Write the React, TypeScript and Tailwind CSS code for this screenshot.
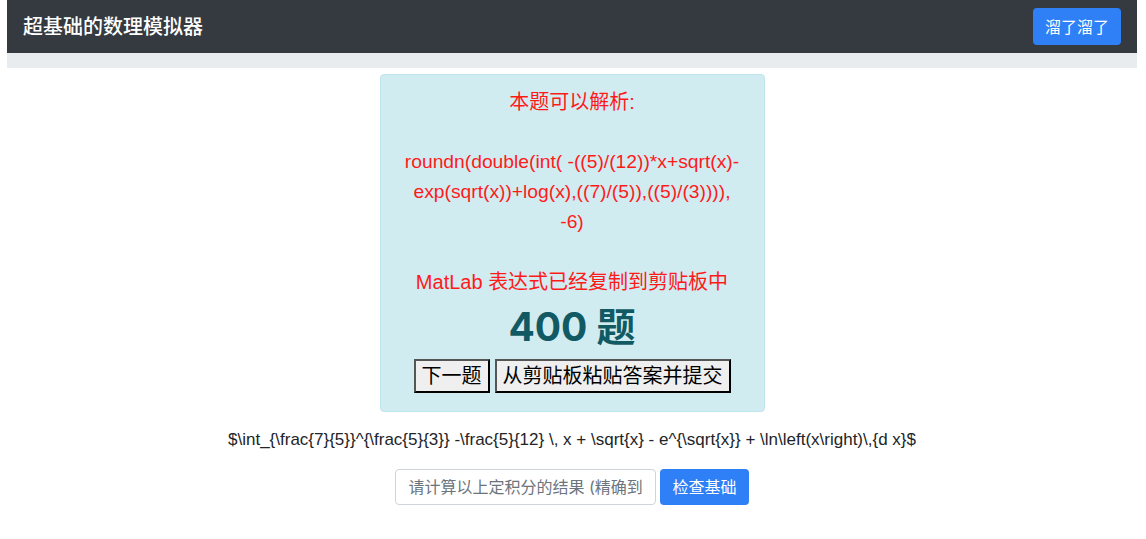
import React, { useState } from "react";

const expr = "roundn(double(int( -((5)/(12))*x+sqrt(x)-exp(sqrt(x))+log(x),((7)/(5)),((5)/(3)))), -6)";
const latex = "$\\int_{\\frac{7}{5}}^{\\frac{5}{3}} -\\frac{5}{12} \\, x + \\sqrt{x} - e^{\\sqrt{x}} + \\ln\\left(x\\right)\\,{d x}$";

export default function App() {
    const [answer, setAnswer] = useState<string>("");

    return (
        <div className="min-h-screen bg-white pl-[7px] pr-[9px] text-[#212529]" style={{ fontFamily: 'Inter, "Noto Sans CJK SC", sans-serif' }}>
            <nav className="flex h-[53px] items-center justify-between bg-[#343a40] pl-4 pr-4">
                <span className="text-[20px] font-medium text-white">超基础的数理模拟器</span>
                <button className="h-[37px] rounded bg-[#2f7ff7] px-3 text-[16px] text-white">溜了溜了</button>
            </nav>
            <div className="h-[15px] bg-[#e9ecef]" />

            <div className="flex flex-col items-center">
                <div className="mt-[6px] w-[385px] rounded border border-[#bee5eb] bg-[#d1ecf1] px-[21px] pt-[12px] pb-[18px] text-center">
                    <div className="leading-[30px] text-[#ff1a1a]" style={{ fontFamily: '"Liberation Sans", "Noto Sans CJK SC", sans-serif' }}>
                        <p className="text-[20px]">本题可以解析:</p>
                        <br />
                        <p className="break-words text-[19.25px]">{expr}</p>
                        <br />
                        <p className="text-[20px]">MatLab 表达式已经复制到剪贴板中</p>
                    </div>
                    <div className="mt-[5px] text-[39px] leading-[50px] font-bold text-[#125a63]">400 题</div>
                    <div className="mt-[7px] flex justify-center gap-[5px]">
                        <button className="h-[34px] border-2 border-[#555] bg-[#efefef] px-[6px] text-[20px] leading-none text-black" style={{ borderStyle: "outset" }}>下一题</button>
                        <button className="h-[34px] border-2 border-[#555] bg-[#efefef] px-[6px] text-[20px] leading-none text-black" style={{ borderStyle: "outset" }}>从剪贴板粘贴答案并提交</button>
                    </div>
                </div>

                <p className="mt-[16px] text-[17px] leading-6" style={{ fontFamily: '"Liberation Sans", sans-serif' }}>{latex}</p>

                <div className="mt-[17px] flex gap-[4px]">
                    <input
                        value={answer}
                        onChange={(e) => setAnswer(e.target.value)}
                        placeholder="请计算以上定积分的结果 (精确到小数点后六位)"
                        className="h-[36px] w-[261px] rounded border border-[#ced4da] px-3 text-[16px] placeholder:text-[#6c757d] outline-none"
                    />
                    <button className="h-[36px] rounded bg-[#2f7ff7] px-3 text-[16px] text-white">检查基础</button>
                </div>
            </div>
        </div>
    );
}
